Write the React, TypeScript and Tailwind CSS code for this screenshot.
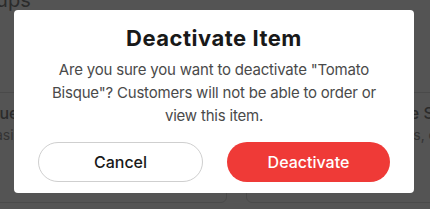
export default function App() {
  return (
    <div className="relative w-[430px] h-[209px] overflow-hidden bg-[#545454] font-['Inter',sans-serif]">
      {/* dimmed page behind the dialog */}
      <div className="flex flex-col text-[#2b2b2b]">
        <div className="h-[10px] -mt-[10px] -ml-[38px] text-[20px] leading-[20px] whitespace-nowrap">Groups</div>
        <div className="flex mt-[92px] h-[111px]">
          <div className="shrink-0 w-[339px] -ml-[112px] rounded-b-[6px] border border-[#4a4a4a] px-[16px] pt-[10px] flex flex-col whitespace-nowrap">
            <span className="text-[16px] font-medium leading-[20px] text-[#2b2b2b]">Tomato Bisque</span>
            <span className="text-[14px] leading-[20px] mt-[2px] -ml-[92px] text-[#333]">Creamy tomato soup with basil.</span>
          </div>
          <div className="shrink-0 w-[220px] ml-[19px] rounded-b-[6px] border border-[#4a4a4a] px-[16px] pt-[10px] flex flex-col whitespace-nowrap">
            <span className="text-[16px] font-medium leading-[20px] text-[#2b2b2b] ml-[69px]">House Side Salad</span>
            <span className="text-[14px] leading-[20px] mt-[2px] ml-[68px] text-[#333]">Mixed greens, carrots</span>
          </div>
        </div>
      </div>

      {/* dialog */}
      <div className="absolute left-[14px] top-[10px] w-[400px] h-[183px] bg-white rounded-[4px] px-[24px] pt-[13px] flex flex-col items-center">
        <h2 className="text-[22px] font-bold leading-[30px] text-[#191919] tracking-[0.5px]">Deactivate Item</h2>
        <p className="mt-[5px] text-[15px] leading-[23px] text-[#4a4a4a] text-center tracking-[-0.2px]">
          Are you sure you want to deactivate "Tomato Bisque"? Customers will not be able to order or view this item.
        </p>
        <div className="flex gap-[24px] w-full mt-[15px]">
          <button className="flex-1 h-[40px] rounded-full border border-[#cfcfcf] text-[16px] font-medium text-[#191919]">
            Cancel
          </button>
          <button className="flex-1 h-[40px] rounded-full bg-[#ef3a37] text-[16px] font-medium text-white">
            Deactivate
          </button>
        </div>
      </div>
    </div>
  );
}
